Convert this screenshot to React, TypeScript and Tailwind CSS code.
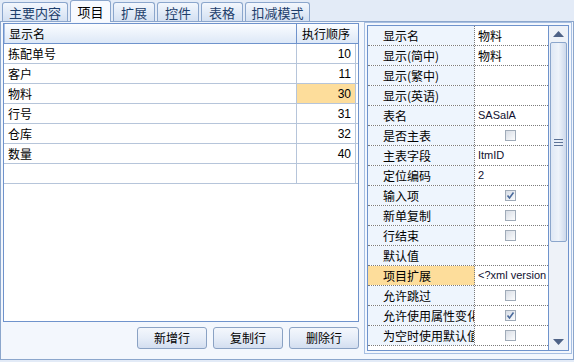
import React from 'react';

const FONT = { fontFamily: '"Noto Sans CJK SC", "Liberation Sans", sans-serif' };

const tabs: [string, string][] = [
  ['主要内容', 'w-[66px]'],
  ['项目', 'w-[41px]'],
  ['扩展', 'w-[42px]'],
  ['控件', 'w-[42px]'],
  ['表格', 'w-[42px]'],
  ['扣减模式', 'w-[65px]'],
];

const items: [string, number][] = [
  ['拣配单号', 10],
  ['客户', 11],
  ['物料', 30],
  ['行号', 31],
  ['仓库', 32],
  ['数量', 40],
];

type Prop = { label: string; value?: string; check?: boolean; selected?: boolean; small?: boolean };

const props: Prop[] = [
  { label: '显示名', value: '物料' },
  { label: '显示(简中)', value: '物料' },
  { label: '显示(繁中)', value: '' },
  { label: '显示(英语)', value: '' },
  { label: '表名', value: 'SASalA', small: true },
  { label: '是否主表', check: false },
  { label: '主表字段', value: 'ItmID', small: true },
  { label: '定位编码', value: '2', small: true },
  { label: '输入项', check: true },
  { label: '新单复制', check: false },
  { label: '行结束', check: false },
  { label: '默认值', value: '' },
  { label: '项目扩展', value: '<?xml version', selected: true, small: true },
  { label: '允许跳过', check: false },
  { label: '允许使用属性变化', check: true },
  { label: '为空时使用默认值', check: false },
];

function CheckBox({ checked }: { checked: boolean }) {
  return (
    <div className="w-[11px] h-[11px] border border-[#a0abb8] bg-gradient-to-br from-[#d8dde5] to-[#fbfcfd] flex items-center justify-center">
      {checked && (
        <svg width="9" height="9" viewBox="0 0 9 9">
          <path d="M1.5 4.5 L3.5 7 L7.5 1.5" fill="none" stroke="#4a6a9c" strokeWidth="1.6" />
        </svg>
      )}
    </div>
  );
}

function Button({ label }: { label: string }) {
  return (
    <div className="w-[70px] h-[22px] rounded-[3px] border border-[#8aa2c4] bg-gradient-to-b from-[#f4f7fc] via-[#e6edf8] to-[#d3def0] flex items-center justify-center text-[12px] text-black">
      {label}
    </div>
  );
}

export default function App() {
  return (
    <div className="w-[574px] h-[362px] bg-[#e3ebf7] overflow-hidden text-[12px] leading-none" style={FONT}>
      {/* Tabs */}
      <div className="h-[21px] flex items-end pl-[2px] gap-[2px]">
        {tabs.map(([t, w], i) =>
          i === 1 ? (
            <div
              key={t}
              className={`${w} h-[22px] -mb-px relative z-10 flex items-center justify-center border border-b-0 border-[#8ba6cc] rounded-t-[3px] bg-[#f7faff] text-black text-[13px]`}
            >
              {t}
            </div>
          ) : (
            <div
              key={t}
              className={`${w} h-[19px] flex items-center justify-center border border-b-0 border-[#8ba6cc] rounded-t-[3px] bg-gradient-to-b from-[#f3f7fd] to-[#d3e0f2] text-[#1d3e6b] text-[13px]`}
            >
              {t}
            </div>
          )
        )}
      </div>

      {/* Tab content */}
      <div className="h-[339px] border border-[#8ba6cc] bg-[#f3f7fd] flex pt-[1px] pl-[2px]">
        {/* Left side */}
        <div className="w-[356px] flex flex-col">
          <div className="h-[299px] border border-[#6f93cc] bg-white flex flex-col">
            <div className="h-[20px] flex border-b border-[#6f93cc] bg-gradient-to-b from-[#fbfdff] to-[#dde8f7]">
              <div className="w-[293px] pl-[4px] flex items-center border-r border-[#6f93cc] border-l border-l-[#a8c0e4]">显示名</div>
              <div className="flex-1 flex items-center pl-[5px]">执行顺序</div>
            </div>
            {items.map(([name, n]) => (
              <div key={name} className="h-[20px] flex border-b border-[#b6c5da]">
                <div className="w-[293px] pl-[4px] flex items-center border-r border-[#b6c5da]">{name}</div>
                <div
                  className={`w-[59px] flex items-center justify-end pr-[4px] border-r border-[#b6c5da] ${
                    n === 30 ? 'bg-[#fddd9b]' : ''
                  }`}
                  style={{ fontFamily: '"Liberation Sans", sans-serif' }}
                >
                  {n}
                </div>
              </div>
            ))}
            <div className="h-[20px] flex border-b border-[#b6c5da]">
              <div className="w-[293px] border-r border-[#b6c5da]" />
              <div className="w-[59px] border-r border-[#b6c5da]" />
            </div>
          </div>
          <div className="flex justify-end gap-[6px] mt-[5px]">
            <Button label="新增行" />
            <Button label="复制行" />
            <Button label="删除行" />
          </div>
        </div>

        {/* Right side: property grid */}
        <div className="ml-[5px] mt-[-1px] w-[208px] h-[332px] border border-[#a7bfe2] p-[2px] bg-[#f3f7fd]">
          <div className="h-full border border-[#6f93cc] flex bg-white">
            <div className="w-[181px] flex flex-col border-r border-[#6f93cc]">
              {props.map((p) => (
                <div key={p.label} className="h-[20px] flex border-b border-dotted border-[#7b7b7b] shrink-0">
                  <div
                    className={`w-[107px] pl-[15px] flex items-center whitespace-nowrap overflow-hidden border-r border-dotted border-[#7b7b7b] ${
                      p.selected ? 'bg-[#fddd9b]' : 'bg-[#eef5fd]'
                    }`}
                  >
                    {p.label}
                  </div>
                  <div className="flex-1 flex items-center pl-[3px] whitespace-nowrap overflow-hidden">
                    {p.check !== undefined ? (
                      <div className="w-full flex justify-center pr-[6px]">
                        <CheckBox checked={p.check} />
                      </div>
                    ) : (
                      <span
                        className={p.small ? 'text-[11px] text-[#101030]' : ''}
                        style={p.small ? { fontFamily: '"Liberation Sans", sans-serif' } : undefined}
                      >
                        {p.value}
                      </span>
                    )}
                  </div>
                </div>
              ))}
            </div>
            {/* Scrollbar */}
            <div className="flex-1 flex flex-col bg-[#eef2f8]">
              <div className="h-[16px] flex items-center justify-center">
                <svg width="11" height="6" viewBox="0 0 11 6">
                  <path d="M0 6 L5.5 0 L11 6 Z" fill="#4f6387" />
                </svg>
              </div>
              <div className="h-[200px] mx-[1px] rounded-[2px] border border-[#8ba6cc] bg-gradient-to-r from-[#dfe8f5] via-[#eef3fa] to-[#cdd9ec] flex items-center justify-center">
                <svg width="9" height="7" viewBox="0 0 9 7">
                  <path d="M0 0.5 H9 M0 3.5 H9 M0 6.5 H9" stroke="#5d7397" strokeWidth="1" />
                </svg>
              </div>
              <div className="flex-1" />
              <div className="h-[16px] flex items-center justify-center">
                <svg width="11" height="6" viewBox="0 0 11 6">
                  <path d="M0 0 L11 0 L5.5 6 Z" fill="#4f6387" />
                </svg>
              </div>
            </div>
          </div>
        </div>
      </div>
    </div>
  );
}
